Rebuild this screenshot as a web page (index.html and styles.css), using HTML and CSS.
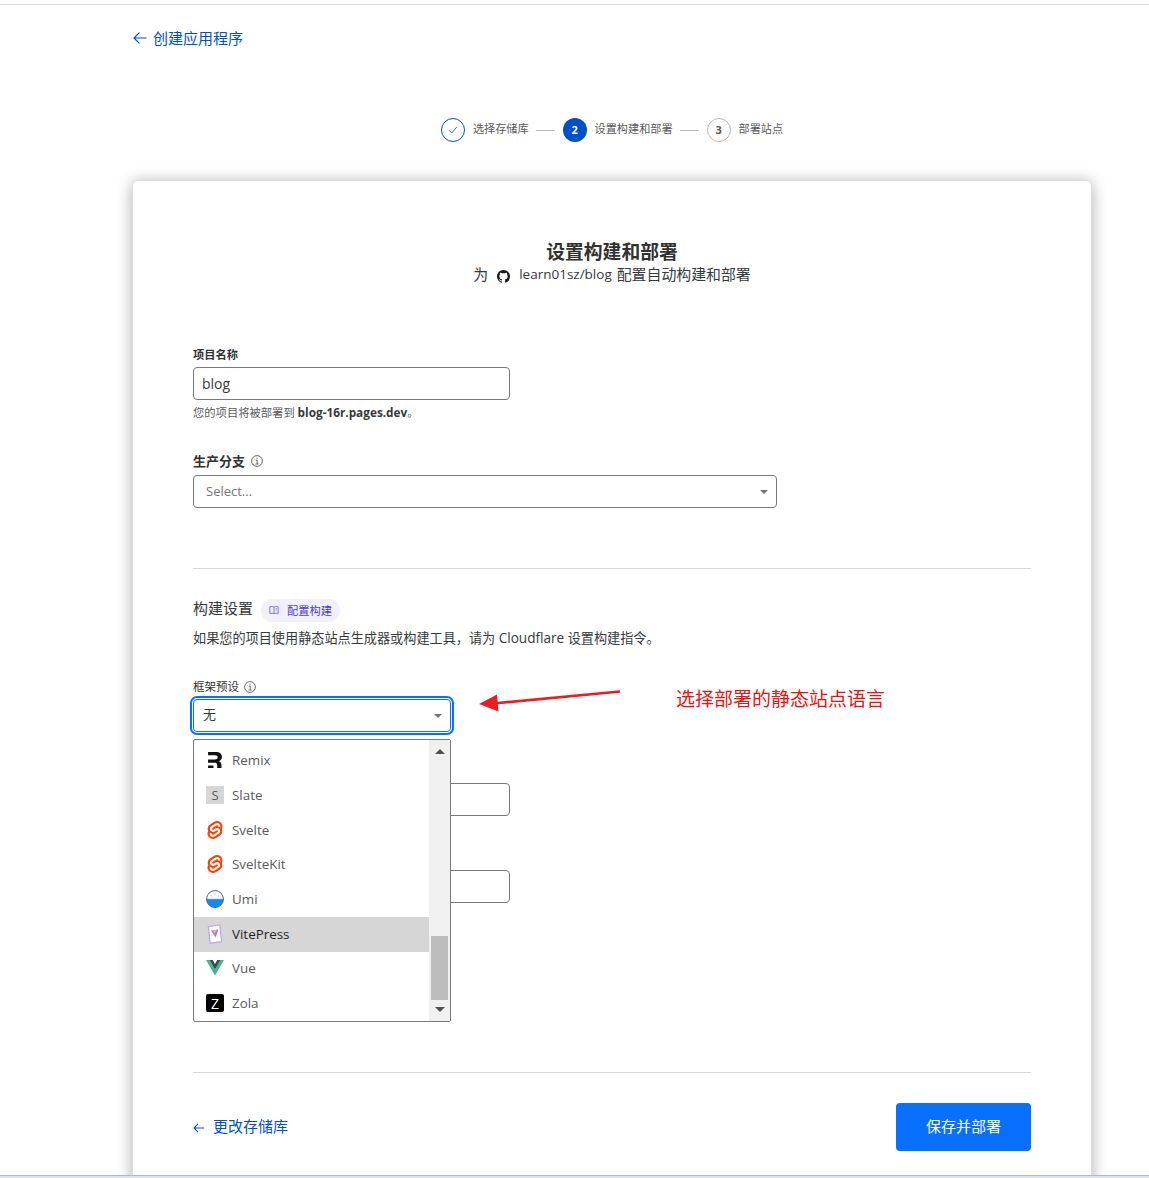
FILE: index.html
```html
<!DOCTYPE html>
<html lang="zh-CN">
<head>
<meta charset="utf-8">
<title>设置构建和部署</title>
<link rel="stylesheet" href="styles.css">
</head>
<body>
<div class="top-rule"></div>
<div class="shell">
  <a class="back-link" href="#">
    <svg class="arrow-icon" viewBox="0 0 14 14"><path d="M13.5 7H1.2M6.4 1.6 1 7l5.4 5.4"/></svg>
    <span>创建应用程序</span>
  </a>

  <ol class="stepper">
    <li class="step-circle step-done"><svg viewBox="0 0 12 12"><path d="M1.5 6.5 4.5 9.5 10.5 2.5"/></svg></li>
    <li class="step-label">选择存储库</li>
    <li class="step-line"></li>
    <li class="step-circle step-active">2</li>
    <li class="step-label">设置构建和部署</li>
    <li class="step-line"></li>
    <li class="step-circle step-next">3</li>
    <li class="step-label">部署站点</li>
  </ol>

  <main class="card">
    <h1 class="title">设置构建和部署</h1>
    <p class="subtitle">
      <span>为</span>
      <svg class="gh-icon" viewBox="0 0 16 16"><path d="M8 0C3.58 0 0 3.58 0 8c0 3.54 2.29 6.53 5.47 7.59.4.07.55-.17.55-.38 0-.19-.01-.82-.01-1.49-2.01.37-2.53-.49-2.69-.94-.09-.23-.48-.94-.82-1.13-.28-.15-.68-.52-.01-.53.63-.01 1.08.58 1.23.82.72 1.21 1.87.87 2.33.66.07-.52.28-.87.51-1.07-1.78-.2-3.64-.89-3.64-3.95 0-.87.31-1.59.82-2.15-.08-.2-.36-1.02.08-2.12 0 0 .67-.21 2.2.82.64-.18 1.32-.27 2-.27s1.36.09 2 .27c1.53-1.04 2.2-.82 2.2-.82.44 1.1.16 1.92.08 2.12.51.56.82 1.27.82 2.15 0 3.07-1.87 3.75-3.65 3.95.29.25.54.73.54 1.48 0 1.07-.01 1.93-.01 2.2 0 .21.15.46.55.38A8.01 8.01 0 0 0 16 8c0-4.42-3.58-8-8-8z"/></svg>
      <span class="repo">learn01sz/blog</span>
      <span>配置自动构建和部署</span>
    </p>

    <label class="label label-first">项目名称</label>
    <div class="input input-short">blog</div>
    <p class="hint">您的项目将被部署到 <b>blog-16r.pages.dev</b>。</p>

    <label class="label label-branch">生产分支
      <svg class="info-icon" viewBox="0 0 12 12"><circle cx="6" cy="6" r="5.4"/><path d="M4.8 5.2H6.2V9M4.6 9H7.6M6 2.6V3.8"/></svg>
    </label>
    <div class="select select-wide"><span class="placeholder">Select...</span></div>

    <hr class="rule rule-mid">

    <div class="section-head">
      <h2 class="section-title">构建设置</h2>
      <a class="pill" href="#">
        <svg class="book-icon" viewBox="0 0 12 12"><path d="M6 2.4C5 1.9 3 1.8 1 2v8c2-.2 4-.1 5 .4 1-.5 3-.6 5-.4V2c-2-.2-4-.1-5 .4zM6 2.4v8M8 4.2h1.4M8 6h1.4"/></svg>
        <span>配置构建</span>
      </a>
    </div>
    <p class="desc">如果您的项目使用静态站点生成器或构建工具，请为 <span class="desc-brand">Cloudflare</span> 设置构建指令。</p>

    <div class="preset">
      <label class="label label-preset">框架预设
        <svg class="info-icon" viewBox="0 0 12 12"><circle cx="6" cy="6" r="5.4"/><path d="M4.8 5.2H6.2V9M4.6 9H7.6M6 2.6V3.8"/></svg>
      </label>
      <div class="select select-focus"><span>无</span></div>

      <div class="menu">
        <ul class="menu-list">
          <li class="menu-row">
            <span class="fw-slot"><svg class="fw-remix" viewBox="1.5 0 21 24"><path fill="#121212" d="M21.511 18.508c.216 2.773.216 4.073.216 5.492H15.31c0-.309.006-.592.011-.878.018-.892.036-1.821-.109-3.698-.19-2.747-1.374-3.358-3.55-3.358H1.574v-5h10.396c2.748 0 4.122-.835 4.122-3.049 0-1.946-1.374-3.125-4.122-3.125H1.573V0h11.541c6.221 0 9.313 2.938 9.313 7.632 0 3.511-2.176 5.8-5.114 6.182 2.48.497 3.93 1.909 4.198 4.694ZM1.573 24v-3.727h6.784c1.133 0 1.379.84 1.379 1.342V24Z"/></svg></span>
            <span>Remix</span>
          </li>
          <li class="menu-row">
            <span class="fw-slot fw-slate">S</span>
            <span>Slate</span>
          </li>
          <li class="menu-row">
            <span class="fw-slot"><svg class="fw-icon" viewBox="0 0 24 24"><path fill="#ff3e00" d="M10.354 21.125a4.44 4.44 0 0 1-4.765-1.767 4.109 4.109 0 0 1-.703-3.107 3.898 3.898 0 0 1 .134-.522l.105-.321.287.21a7.21 7.21 0 0 0 2.186 1.092l.208.063-.02.208a1.253 1.253 0 0 0 .226.83 1.337 1.337 0 0 0 1.435.533 1.231 1.231 0 0 0 .343-.15l5.59-3.562a1.164 1.164 0 0 0 .524-.778 1.242 1.242 0 0 0-.211-.937 1.338 1.338 0 0 0-1.435-.533 1.23 1.23 0 0 0-.343.15l-2.133 1.36a4.078 4.078 0 0 1-1.135.499 4.44 4.44 0 0 1-4.765-1.766 4.108 4.108 0 0 1-.702-3.108 3.855 3.855 0 0 1 1.742-2.582l5.589-3.563a4.072 4.072 0 0 1 1.135-.499 4.44 4.44 0 0 1 4.765 1.767 4.109 4.109 0 0 1 .703 3.107 3.943 3.943 0 0 1-.134.522l-.105.321-.286-.21a7.204 7.204 0 0 0-2.187-1.093l-.208-.063.02-.207a1.255 1.255 0 0 0-.226-.831 1.337 1.337 0 0 0-1.435-.532 1.231 1.231 0 0 0-.343.15L8.62 9.368a1.162 1.162 0 0 0-.524.778 1.24 1.24 0 0 0 .211.937 1.338 1.338 0 0 0 1.435.533 1.235 1.235 0 0 0 .344-.151l2.132-1.36a4.067 4.067 0 0 1 1.135-.498 4.44 4.44 0 0 1 4.765 1.766 4.108 4.108 0 0 1 .702 3.108 3.857 3.857 0 0 1-1.742 2.583l-5.589 3.562a4.072 4.072 0 0 1-1.135.499m10.358-17.95C18.484-.015 14.082-.96 10.9 1.068L5.31 4.63a6.412 6.412 0 0 0-2.896 4.295 6.753 6.753 0 0 0 .666 4.336 6.43 6.43 0 0 0-.96 2.396 6.833 6.833 0 0 0 1.168 5.167c2.229 3.19 6.63 4.135 9.812 2.108l5.59-3.562a6.41 6.41 0 0 0 2.896-4.295 6.756 6.756 0 0 0-.665-4.336 6.429 6.429 0 0 0 .958-2.396 6.831 6.831 0 0 0-1.167-5.168Z"/></svg></span>
            <span>Svelte</span>
          </li>
          <li class="menu-row">
            <span class="fw-slot"><svg class="fw-icon" viewBox="0 0 24 24"><path fill="#ff3e00" d="M10.354 21.125a4.44 4.44 0 0 1-4.765-1.767 4.109 4.109 0 0 1-.703-3.107 3.898 3.898 0 0 1 .134-.522l.105-.321.287.21a7.21 7.21 0 0 0 2.186 1.092l.208.063-.02.208a1.253 1.253 0 0 0 .226.83 1.337 1.337 0 0 0 1.435.533 1.231 1.231 0 0 0 .343-.15l5.59-3.562a1.164 1.164 0 0 0 .524-.778 1.242 1.242 0 0 0-.211-.937 1.338 1.338 0 0 0-1.435-.533 1.23 1.23 0 0 0-.343.15l-2.133 1.36a4.078 4.078 0 0 1-1.135.499 4.44 4.44 0 0 1-4.765-1.766 4.108 4.108 0 0 1-.702-3.108 3.855 3.855 0 0 1 1.742-2.582l5.589-3.563a4.072 4.072 0 0 1 1.135-.499 4.44 4.44 0 0 1 4.765 1.767 4.109 4.109 0 0 1 .703 3.107 3.943 3.943 0 0 1-.134.522l-.105.321-.286-.21a7.204 7.204 0 0 0-2.187-1.093l-.208-.063.02-.207a1.255 1.255 0 0 0-.226-.831 1.337 1.337 0 0 0-1.435-.532 1.231 1.231 0 0 0-.343.15L8.62 9.368a1.162 1.162 0 0 0-.524.778 1.24 1.24 0 0 0 .211.937 1.338 1.338 0 0 0 1.435.533 1.235 1.235 0 0 0 .344-.151l2.132-1.36a4.067 4.067 0 0 1 1.135-.498 4.44 4.44 0 0 1 4.765 1.766 4.108 4.108 0 0 1 .702 3.108 3.857 3.857 0 0 1-1.742 2.583l-5.589 3.562a4.072 4.072 0 0 1-1.135.499m10.358-17.95C18.484-.015 14.082-.96 10.9 1.068L5.31 4.63a6.412 6.412 0 0 0-2.896 4.295 6.753 6.753 0 0 0 .666 4.336 6.43 6.43 0 0 0-.96 2.396 6.833 6.833 0 0 0 1.168 5.167c2.229 3.19 6.63 4.135 9.812 2.108l5.59-3.562a6.41 6.41 0 0 0 2.896-4.295 6.756 6.756 0 0 0-.665-4.336 6.429 6.429 0 0 0 .958-2.396 6.831 6.831 0 0 0-1.167-5.168Z"/></svg></span>
            <span>SvelteKit</span>
          </li>
          <li class="menu-row">
            <span class="fw-slot"><svg class="fw-icon" viewBox="0 0 18 18"><circle cx="9" cy="9" r="8.4" fill="#fff" stroke="#55626c" stroke-width="1"/><path fill="#0a8cff" stroke="#55626c" stroke-width=".5" d="M.7 9.2h16.6a8.3 8.3 0 0 1-16.6 0z"/><path stroke="#8a98a3" stroke-width="1" d="M5 5.5l.8.8M9 3.5v1M13 5.5l-.8.8"/></svg></span>
            <span>Umi</span>
          </li>
          <li class="menu-row menu-row-active">
            <span class="fw-slot"><svg class="fw-vite" viewBox="0 0 16 20"><path fill="#fff" stroke="#bfa6f7" stroke-width="1.3" d="M1.4 2.6 12.8.9 14.6 17.6 3 19.2z"/><path fill="#a277ff" d="M4 6.4l7.4-1-2.8 8.2z"/><path fill="#f5c518" d="M6 6.2l3.4-.5-1.6 4.2z"/></svg></span>
            <span>VitePress</span>
          </li>
          <li class="menu-row">
            <span class="fw-slot"><svg class="fw-icon" viewBox="0 0 18 16"><path fill="#41b883" d="M0 0h3.6L9 9.4 14.4 0H18L9 15.6z"/><path fill="#35495e" d="M3.6 0h3.1L9 4l2.3-4h3.1L9 9.4z"/></svg></span>
            <span>Vue</span>
          </li>
          <li class="menu-row">
            <span class="fw-slot fw-zola">Z</span>
            <span>Zola</span>
          </li>
        </ul>
        <div class="scrollbar">
          <span class="scroll-up"></span>
          <span class="scroll-thumb"></span>
          <span class="scroll-down"></span>
        </div>
      </div>

      <svg class="note-arrow" viewBox="0 0 142 24"><path fill="none" stroke="#ed1c24" stroke-width="2.6" d="M141 1.5 14 13.5"/><path fill="#ed1c24" d="M0 14 18 4.5l1.5 17z"/></svg>
      <span class="note-text">选择部署的静态站点语言</span>
    </div>

    <div class="input input-short input-under-a"></div>
    <div class="input input-short input-under-b"></div>

    <hr class="rule rule-foot">

    <div class="foot">
      <a class="back-link foot-link" href="#">
        <svg class="arrow-icon foot-arrow" viewBox="0 0 14 14"><path d="M12 7H1.2M5.4 2.6 1 7l4.4 4.4"/></svg>
        <span>更改存储库</span>
      </a>
      <button class="primary" type="button">保存并部署</button>
    </div>
  </main>
</div>
<div class="window-edge"></div>
</body>
</html>
```

FILE: styles.css
```css
* { box-sizing: border-box; }

html, body { margin: 0; padding: 0; }

body {
  height: 1178px;
  overflow: hidden;
  background: #fff;
  color: #313131;
  font-family: "Open Sans", "Noto Sans CJK SC", sans-serif;
}

.top-rule {
  height: 1px;
  margin-top: 4px;
  background: #dcdcdc;
}

.shell { padding: 0 57px 0 132px; }

.back-link {
  display: flex;
  align-items: center;
  gap: 6px;
  height: 20px;
  margin: 23px 0 0 1px;
  color: #0051c3;
  font-size: 15px;
  line-height: 20px;
  text-decoration: none;
}

.arrow-icon {
  width: 14px;
  height: 14px;
  fill: none;
  stroke: #0051c3;
  stroke-width: 1.2;
}

.stepper {
  display: flex;
  align-items: center;
  justify-content: center;
  height: 24px;
  margin: 70px 0 0;
  padding: 0;
  list-style: none;
}

.step-circle {
  display: flex;
  align-items: center;
  justify-content: center;
  width: 24px;
  height: 24px;
  padding-bottom: 2px;
  border-radius: 50%;
  font-size: 11px;
  font-weight: 700;
}

.step-done { padding-bottom: 0; border: 1px solid #0051c3; }

.step-done svg {
  width: 10px;
  height: 10px;
  fill: none;
  stroke: #0051c3;
  stroke-width: 1;
}

.step-active { background: #0051c3; color: #fff; }

.step-next { border: 1px solid #b9b9b9; color: #595959; }

.step-label {
  margin: -2px 0 0 8px;
  color: #595959;
  font-size: 11.15px;
  line-height: 16px;
}

.step-line {
  width: 19px;
  height: 1px;
  margin: 0 8px 0 7px;
  background: #b9b9b9;
}

.card {
  height: 1040px;
  margin-top: 38px;
  padding: 58px 60px 0;
  border: 1px solid #dedede;
  border-radius: 5px;
  background: #fff;
  box-shadow: 0 2px 16px rgba(0, 0, 0, 0.32);
}

.title {
  margin: 0;
  color: #313131;
  font-size: 18.8px;
  font-weight: 700;
  line-height: 26px;
  text-align: center;
}

.subtitle {
  display: flex;
  align-items: center;
  justify-content: center;
  height: 20px;
  margin: 0;
  padding-bottom: 2px;
  color: #36393a;
  font-size: 14.9px;
  line-height: 20px;
}

.gh-icon {
  width: 13px;
  height: 13px;
  margin: 4px 9px 0 9px;
  fill: #1b1b1b;
}

.repo { margin-right: 5px; font-size: 13.5px; }

.label {
  display: flex;
  align-items: center;
  color: #313131;
  font-weight: 600;
}

.label-first {
  margin-top: 62px;
  font-size: 11.25px;
  line-height: 16px;
}

.label-branch {
  gap: 6px;
  margin-top: 31px;
  font-size: 13px;
  line-height: 18px;
}

.label-preset {
  gap: 5px;
  margin: 0;
  font-size: 11.5px;
  font-weight: 400;
  line-height: 16px;
}

.info-icon {
  width: 12px;
  height: 12px;
  fill: none;
  stroke: #595959;
  stroke-width: 0.9;
}

.input,
.select {
  height: 33px;
  border: 1px solid #797979;
  border-radius: 4px;
  background: #fff;
}

.input {
  padding: 0 8px;
  color: #36393a;
  font-size: 14px;
  line-height: 32px;
}

.input-short { width: 317px; margin-top: 4px; }

.hint {
  height: 16px;
  margin: 5px 0 0;
  color: #595959;
  font-size: 11.3px;
  line-height: 15px;
}

.hint b { color: #36393a; font-size: 11.8px; font-weight: 700; line-height: 1; }

.select {
  position: relative;
  display: flex;
  align-items: center;
  margin-top: 5px;
  padding: 0 12px 2px;
  color: #36393a;
  font-size: 13px;
}

.select::after {
  content: "";
  position: absolute;
  top: 14px;
  right: 8px;
  border-top: 4px solid #757575;
  border-right: 4px solid transparent;
  border-left: 4px solid transparent;
}

.select-wide { width: 584px; }

.placeholder { color: #757575; }

.select-focus {
  width: 258px;
  margin-top: 4px;
  padding: 0 9px 4px;
  border-color: #086fff;
  box-shadow: 0 0 0 1px #fff, 0 0 0 3px #086fff;
}

.rule {
  height: 1px;
  margin: 0;
  border: 0;
  background: #d9d9d9;
}

.rule-mid { margin-top: 60px; }

.section-head {
  display: flex;
  align-items: center;
  gap: 8px;
  height: 23px;
  margin-top: 30px;
}

.section-title {
  margin: -5px 0 0;
  color: #36393a;
  font-size: 15px;
  font-weight: 400;
  line-height: 20px;
}

.pill {
  display: flex;
  align-items: center;
  gap: 8px;
  width: 79px;
  height: 23px;
  padding: 0 0 2px 8px;
  border-radius: 12px;
  background: #f2f0ff;
  color: #4a3fc0;
  font-size: 11.25px;
  text-decoration: none;
}

.book-icon {
  width: 10px;
  height: 10px;
  fill: none;
  stroke: #6a5cd8;
  stroke-width: 1;
}

.desc {
  height: 20px;
  margin: 6px 0 0;
  color: #36393a;
  font-size: 13.15px;
  line-height: 20px;
}

.desc-brand { font-size: 13.6px; line-height: 1; }

.preset {
  position: relative;
  margin-top: 31px;
}

.menu {
  position: absolute;
  top: 60px;
  left: 0;
  z-index: 2;
  display: flex;
  width: 258px;
  height: 283px;
  border: 1px solid #797979;
  border-radius: 2px;
  background: #fff;
}

.menu-list {
  flex: 1;
  margin: 0;
  padding: 3.4px 0 0;
  list-style: none;
}

.menu-row {
  display: flex;
  align-items: center;
  height: 34.7px;
  padding: 0 0 1px 12px;
  gap: 8px;
  color: #595959;
  font-size: 13.4px;
}

.menu-row-active { background: #d6d6d6; color: #1f1f1f; }

.fw-slot {
  display: flex;
  flex: none;
  align-items: center;
  justify-content: center;
  width: 18px;
  height: 18px;
  font-size: 12px;
}

.fw-icon {
  width: 18px;
  height: 18px;
}

.fw-remix { width: 14px; height: 16px; }

.fw-vite { width: 16px; height: 20px; }

.fw-slate { background: #d6d6d6; color: #595959; font-size: 13px; }

.fw-zola { border-radius: 2px; background: #000; color: #fff; font-size: 14px; }

.scrollbar {
  display: flex;
  flex: none;
  flex-direction: column;
  align-items: center;
  width: 21px;
  height: 100%;
  padding-top: 9px;
  background: #f0f0f0;
}

.scroll-up,
.scroll-down {
  border-right: 5px solid transparent;
  border-left: 5px solid transparent;
}

.scroll-up { border-bottom: 5px solid #505050; }

.scroll-thumb {
  width: 17px;
  height: 64px;
  margin-top: 182px;
  background: #bdbdbd;
}

.scroll-down { margin-top: 7px; border-top: 5px solid #505050; }

.note-arrow {
  position: absolute;
  top: 11px;
  left: 286px;
  width: 142px;
  height: 24px;
}

.note-text {
  position: absolute;
  top: 6px;
  left: 483px;
  color: #f01010;
  font-family: "Noto Sans CJK SC", sans-serif;
  font-size: 19px;
  line-height: 26px;
  white-space: nowrap;
}

.input-under-a { margin-top: 51px; }

.input-under-b { margin-top: 54px; }

.rule-foot { margin-top: 169px; }

.foot {
  display: flex;
  align-items: center;
  justify-content: space-between;
  margin-top: 30px;
}

.foot-link { margin: 0; padding-bottom: 2px; }

.foot-arrow { width: 13px; margin: 4px 1px 0 0; }

.primary {
  width: 135px;
  height: 48px;
  padding: 0 0 4px;
  border: 0;
  border-radius: 4px;
  background: #086fff;
  color: #fff;
  font-family: inherit;
  font-size: 15px;
}

.window-edge {
  position: fixed;
  right: 0;
  bottom: 0;
  left: 0;
  height: 3px;
  border-top: 1px solid #a9bccb;
  background: #d3e6f6;
}
```
